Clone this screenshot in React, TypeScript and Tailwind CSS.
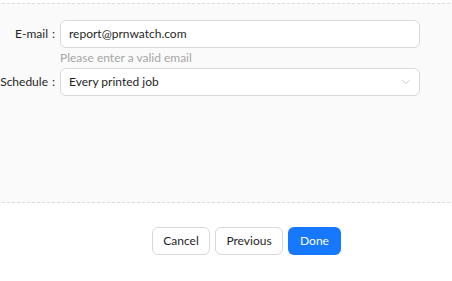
import { ChevronDown } from "lucide-react";

export default function App() {
  return (
    <div
      className="w-[452px] h-[281px] bg-white overflow-hidden text-[12px] text-[#1f1f1f]"
      style={{ fontFamily: 'Lato, "Noto Sans", sans-serif' }}
    >
      <div className="mt-[3px] -mx-2 h-[200px] bg-[#fafafa] border-y border-dashed border-[#dcdcdc] pt-4 px-2">
        {/* E-mail row */}
        <div className="flex items-start">
          <label className="w-[60px] shrink-0 h-[28px] flex items-center justify-end pr-[5px] whitespace-nowrap">
            E-mail<span className="ml-[4px]">:</span>
          </label>
          <div className="w-[360px]">
            <div className="h-[28px] rounded-md border border-[#d9d9d9] bg-white flex items-center px-2">
              report@prnwatch.com
            </div>
            <div className="h-[20px] leading-[20px] text-[#a6a6a6]">Please enter a valid email</div>
          </div>
        </div>

        {/* Schedule row */}
        <div className="flex items-start">
          <label className="w-[60px] shrink-0 h-[28px] flex items-center justify-end pr-[5px] whitespace-nowrap">
            Schedule<span className="ml-[4px]">:</span>
          </label>
          <div className="w-[360px] h-[28px] rounded-md border border-[#d9d9d9] bg-white flex items-center justify-between pl-2 pr-[6px]">
            <span>Every printed job</span>
            <ChevronDown size={14} strokeWidth={1.5} className="text-[#c4c4c4]" />
          </div>
        </div>
      </div>

      <div className="flex gap-[5px] pl-[152px] pt-[24px]">
        <button className="h-[28px] w-[58px] rounded-md border border-[#d9d9d9] bg-white">Cancel</button>
        <button className="h-[28px] w-[68px] rounded-md border border-[#d9d9d9] bg-white">Previous</button>
        <button className="h-[28px] w-[53px] rounded-md bg-[#1677ff] text-white">Done</button>
      </div>
    </div>
  );
}
